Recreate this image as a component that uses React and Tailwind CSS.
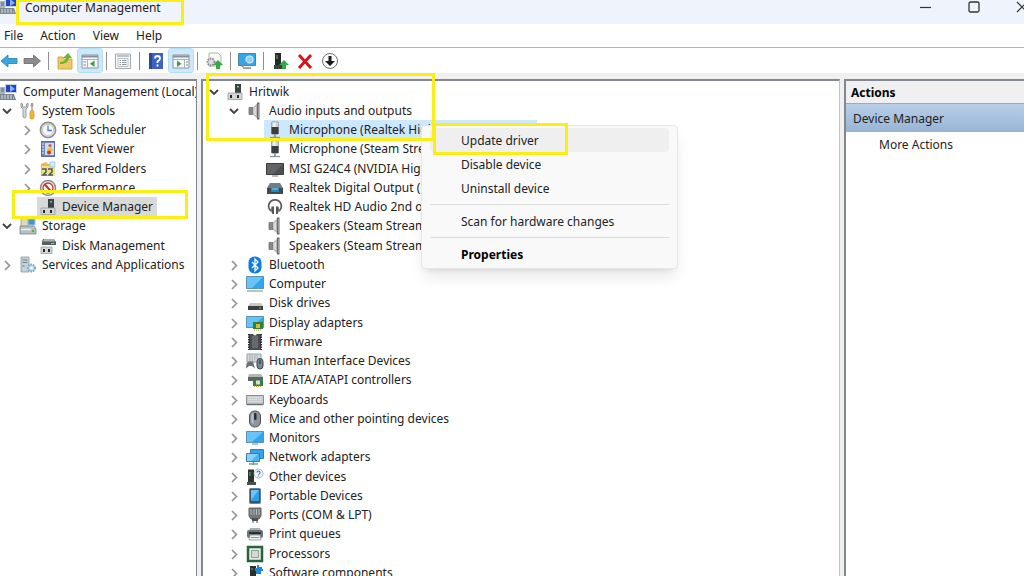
const icons = {
  computerManagement: (
    <>
      <path d="M5 1h12v9H5z" fill="#c9d3e4" />
      <path d="M6 2h10v7H6z" fill="#2643c4" />
      <path d="M10 2l5 4-5 3z" fill="#7fb2ff" />
      <path d="M0 4h5v8H0z" fill="#aab4bd" />
      <path d="M1 6h3M1 8h3" stroke="#5b6670" />
      <path d="M0 11h14l2 6H0z" fill="#7d8791" />
      <path d="M1 13h12M1 15h13" stroke="#dfe5ea" strokeDasharray="2 1" />
    </>
  ),
  tools: (
    <>
      <path
        d="M2 1v4l2 2v8q1.500 2 3 0V7l2-2V1L7.500 2v3h-4V2z"
        fill="#d5dade"
        stroke="#84898e"
        strokeWidth=".8"
      />
      <path d="M12 1h2l.5 3-.8 1v4h-1.400V5l-.8-1z" fill="#9ba1a6" />
      <rect x="11" y="8.500" width="4" height="8.500" rx="1.500" fill="#f2b632" stroke="#c78817" strokeWidth=".6" />
    </>
  ),
  clock: (
    <>
      <circle cx="9" cy="9" r="7.600" fill="#dfe5ea" stroke="#8c9296" strokeWidth="1.600" />
      <circle cx="9" cy="9" r="5.600" fill="#f4f8fc" stroke="#c9bd93" strokeWidth=".7" />
      <path d="M9 4.500V9.500h4" fill="none" stroke="#5b80b0" strokeWidth="1.300" />
    </>
  ),
  eventViewer: (
    <>
      <rect x="2.500" y="1.500" width="13" height="15" fill="#7187b4" stroke="#5a6e99" />
      <path d="M6 3h9v12H6z" fill="#cddcf0" />
      <path d="M3 4h2M3 7h2M3 10h2M3 13h2" stroke="#e7edf7" />
      <path d="M8 9.500l4-3 2 4-5 3z" fill="#f2c02c" />
      <circle cx="11" cy="5.500" r="1.600" fill="#d65a4a" />
      <circle cx="10" cy="12.500" r="2" fill="#c93434" />
    </>
  ),
  sharedFolders: (
    <>
      <path d="M2 4l5-2 2 2h7v12H2z" fill="#e5bd4c" />
      <path d="M3 6h13v10H3z" fill="#f8dd83" />
      <path d="M11 2h5v5h-5z" fill="#d8ecf8" stroke="#8db1c9" strokeWidth=".6" />
      <path d="M3 9h4v3l-3 3h4M9 9h4v3l-3 3h4" fill="none" stroke="#42605a" strokeWidth="1.500" />
    </>
  ),
  performance: (
    <>
      <circle cx="9" cy="9" r="7.500" fill="#f4f4f4" stroke="#8c8c8c" strokeWidth="1.500" />
      <circle cx="9" cy="9" r="5" fill="#fff" stroke="#c93434" strokeWidth="1.300" />
      <path d="M5.500 5l7 8" stroke="#c93434" strokeWidth="2" />
    </>
  ),
  device: (
    <>
      <path d="M9 1h6v10H9z" fill="#3c4245" />
      <path d="M11 3h2v1.500h-2z" fill="#8dc492" />
      <path d="M2 10h14v6.500H2z" fill="#d3d6d7" stroke="#9a9e9f" strokeWidth=".8" />
      <path d="M4 12h2v3H4zM11 12h2v3h-2z" fill="#25292b" />
    </>
  ),
  storage: (
    <>
      <path d="M2 1h7v9H2z" fill="#e0d9b7" stroke="#9b9778" strokeWidth=".7" />
      <path d="M9 2h7v6H9z" fill="#3f94d3" stroke="#b2c5d2" />
      <path d="M1 9h14l2 3v5H1z" fill="#b8c0c4" stroke="#798388" strokeWidth=".8" />
      <path d="M2 12.500h10" stroke="#edf1f3" strokeWidth="1.500" />
      <circle cx="14" cy="14" r="1.300" fill="#4bb84b" />
    </>
  ),
  disk: (
    <>
      <path d="M4 2h11l2 3v3H3V5z" fill="#56605d" />
      <path d="M5 2h10l1 2.500H4z" fill="#a8b1ae" />
      <path d="M12 6.500h3" stroke="#78d77e" />
      <path d="M2 10h11v6.500H2z" fill="#d3d6d7" stroke="#9a9e9f" strokeWidth=".8" />
      <path d="M4 12h2v3H4zM9 12h2v3H9z" fill="#25292b" />
    </>
  ),
  services: (
    <>
      <path d="M2 1h8v15H2z" fill="#c8d0d7" stroke="#8e989f" strokeWidth=".8" />
      <path d="M3.500 4h5M3.500 6.500h5" stroke="#74808a" />
      <path d="M3.500 9h2v2h-2z" fill="#54b7d7" />
      <circle cx="12.500" cy="12" r="3.500" fill="#b9ddee" stroke="#6aa3c4" strokeDasharray="1.500 1" strokeWidth="1.800" />
      <circle cx="12.500" cy="12" r="1.300" fill="#fff" />
    </>
  ),
  speaker: (
    <>
      <path d="M3 5.500h4v7H3z" fill="#8a8a8a" stroke="#666" strokeWidth=".7" />
      <path d="M7 5.500L11.500 1v16L7 12.500z" fill="#b9b9b9" />
      <path d="M11 .5h2.500v17H11z" fill="#6a6a6a" />
      <path d="M7.500 6.500l2.500-2v9l-2.500-2z" fill="#dadada" />
      <path d="M12 2h.8v14H12z" fill="#a9a9a9" />
    </>
  ),
  microphone: (
    <>
      <rect x="5.500" y=".8" width="7" height="12.500" rx="1" fill="#d0d3d5" stroke="#9ea2a5" strokeWidth=".9" />
      <path d="M5.500 6h7v7h-7z" fill="#3b3e40" />
      <path d="M7.500 1.500h2v4.500h-2z" fill="#f7f8f9" />
      <path d="M8 13h2v3H8z" fill="#9a9ea1" />
      <path d="M4 16.500h10" stroke="#8c9194" strokeWidth="1.300" />
    </>
  ),
  display: (
    <>
      <path d="M.5 3.500h17v11H.5z" fill="#4d4f50" stroke="#3c3c3c" />
      <path d="M1 4h16L7 14H1z" fill="#626567" />
      <path d="M6 16h6" stroke="#777" />
    </>
  ),
  digitalOutput: (
    <>
      <path d="M4 4h10l3 5H1z" fill="#717d85" />
      <path d="M1 9h16v6H1z" fill="#3d4b55" />
      <path d="M5 9h8v4H5z" fill="#2c86ba" />
      <path d="M6 10h6" stroke="#7ecbf0" />
    </>
  ),
  headphones: (
    <>
      <path d="M5 13C.5 9 3 1.800 9 1.800S17.500 9 13 13" fill="none" stroke="#5a5c5d" strokeWidth="1.700" />
      <path d="M5.500 8.500H8V16H6.500Q4.500 13 5.500 8.500zM10 8.500h2.500q1 4.500-1 7.500H10z" fill="#555" />
    </>
  ),
  bluetooth: (
    <>
      <rect x="2.500" y=".5" width="13" height="17" rx="6" fill="#0b7de3" />
      <path d="M6 6l6 6-3 3V3l3 3-6 6" fill="none" stroke="#fff" strokeWidth="1.300" />
    </>
  ),
  computer: (
    <>
      <path d="M.5 1.500h17v12H.5z" fill="#36a4ea" stroke="#5c93b5" />
      <path d="M1 2h16L6 13H1z" fill="#68c3f8" />
      <path d="M1 16h16" stroke="#9fb0ba" strokeWidth="1.500" />
    </>
  ),
  diskDrive: (
    <>
      <path d="M4 9h11l2 3H2z" fill="#c9c9c9" />
      <path d="M2 12h15v4H2z" fill="#3b3e3c" />
      <path d="M13 14h2" stroke="#6fbc78" />
    </>
  ),
  displayAdapter: (
    <>
      <path d="M.5 2.500h17v11H.5z" fill="#36a4ea" stroke="#5c93b5" />
      <path d="M1 3h16L6 13H1z" fill="#68c3f8" />
      <path d="M7 8h10v7H7z" fill="#36803c" />
      <path d="M10 10h4v4h-4z" fill="#d8b93a" />
      <path d="M8 16h8" stroke="#b99c36" strokeDasharray="1 1" />
    </>
  ),
  firmware: (
    <>
      <path d="M3 1h12v16H3z" fill="#4b4d4e" />
      <path d="M3 1v16M15 1v16" stroke="#2b2b2b" strokeWidth="2" strokeDasharray="1.500 1" />
      <path d="M6 3h6v12H6z" fill="#666a6c" />
      <path d="M7 1q2 3 4 0z" fill="#eee" />
    </>
  ),
  hid: (
    <>
      <path d="M1 2h14v8H1z" fill="#d5dbdf" stroke="#98a0a6" />
      <path d="M3 4h10M3 6h10M3 8h6" stroke="#929ca3" strokeDasharray="1.500 1" />
      <path d="M0 16.500q0-7 3-7h4l2 7-3-2.500H3z" fill="#6b7276" />
      <rect x="11" y="6.500" width="6" height="10.500" rx="3" fill="#7a868f" stroke="#3c454b" />
      <path d="M14 8v4" stroke="#27303a" />
    </>
  ),
  ide: (
    <>
      <path d="M3 3h12l2 3H2z" fill="#b2b8b5" />
      <path d="M2 6h15v4H2z" fill="#5b6562" />
      <path d="M7 8h10v7H7z" fill="#367f49" />
      <path d="M10 9.500h4v4h-4z" fill="#dde0c4" />
      <path d="M8 15.500h8" stroke="#c5a53c" strokeDasharray="1 1" />
    </>
  ),
  keyboard: (
    <>
      <path d="M.5 4.500h17v9H.5z" fill="#c7cbcd" stroke="#8a9195" />
      <path d="M2 6.500h14M2 8.500h14M2 10.500h14" stroke="#dfe3e5" strokeDasharray="1.500 .5" />
      <path d="M1 13.500h16" stroke="#6a7175" strokeWidth="1.500" />
    </>
  ),
  mouse: (
    <>
      <rect x="3.500" y="1" width="11" height="16" rx="5" fill="#8c949c" stroke="#4c5258" />
      <path d="M5.500 5q1-2 2-2v11q-2 0-2-4z" fill="#bcc3c9" />
      <rect x="8" y="3" width="2.500" height="7" rx="1" fill="#27303a" />
    </>
  ),
  monitor: (
    <>
      <path d="M.5 2.500h17v11H.5z" fill="#36a4ea" stroke="#5c93b5" />
      <path d="M1 3h16L6 13H1z" fill="#68c3f8" />
      <path d="M6 15h6" stroke="#9fb0ba" strokeWidth="1.500" />
    </>
  ),
  network: (
    <>
      <path d="M4.500 1.500h13v9h-13z" fill="#36a4ea" stroke="#3c7da8" />
      <path d="M.5 5.500h13v8H.5z" fill="#4cb4f3" stroke="#3c7da8" />
      <path d="M1 6h11l-7 7H1z" fill="#86d2fb" />
      <path d="M7.500 14v3M3 16h9" stroke="#6fa58a" strokeWidth="1.500" />
    </>
  ),
  other: (
    <>
      <path d="M2 1.500h6V14H2z" fill="#2c3330" />
      <path d="M3 5h2M3 7h2" stroke="#62c46d" />
      <path d="M1 14h9v3H1z" fill="#4b514e" />
      <circle cx="12.500" cy="5.500" r="4.500" fill="#f2f6f9" stroke="#9aa5ad" strokeWidth=".8" />
      <path d="M11 4.500q0-1.500 1.500-1.500T14 4.500t-1.500 2M12.500 7.500v1" fill="none" stroke="#3c78b5" strokeWidth="1.200" />
    </>
  ),
  portable: (
    <>
      <rect x="3.500" y="1.500" width="11" height="15" rx="1" fill="#43525d" stroke="#6b8597" />
      <path d="M5 3h8v11H5z" fill="#2fa0ea" />
      <path d="M5 3h8l-8 10z" fill="#68c3f8" />
    </>
  ),
  port: (
    <>
      <path d="M3 2h12v8l-2 3H5l-2-3z" fill="#737779" stroke="#606466" />
      <path d="M5 3v6M8 3v6M10.500 3v6M13 3v6" stroke="#b7bbbd" />
      <path d="M6 12h6v3H6z" fill="#4d5153" />
      <path d="M7 15v2M11 15v2" stroke="#8d9193" strokeWidth="1.500" />
    </>
  ),
  printer: (
    <>
      <path d="M4 3h10l1 3H3z" fill="#a9b0b4" />
      <rect x="1" y="5" width="16" height="8" rx="2" fill="#697279" />
      <path d="M3 7h12v2H3z" fill="#2a3034" />
      <path d="M4 10h10l1 5H3z" fill="#e9f0f2" stroke="#7f898e" strokeWidth=".7" />
      <path d="M5 12.500h8" stroke="#62b6a0" />
    </>
  ),
  processor: (
    <>
      <path d="M2 2h14v14H2z" fill="#e6ece4" stroke="#29633c" strokeWidth="2.500" />
      <path d="M5.500 5.500h7v7h-7z" fill="#d5dad5" stroke="#86a38c" />
    </>
  ),
  software: (
    <>
      <path d="M4 2h6v13H4z" fill="#292f2c" />
      <path d="M5 5h2" stroke="#62c46d" />
      <path d="M3 14h8v3H3z" fill="#4b514e" />
      <path d="M11 1h2v2h3v2h1v2h-2v3h-5V7H9V4h2z" fill="#1f86d9" />
    </>
  ),
};

const toolbarIcons = {
  back: <path d="M0 9l7-6v3.500h9v5H7V15z" fill="#3aa6dc" stroke="#2380b4" strokeWidth=".8" />,
  forward: <path d="M17.500 9l-7-6v3.500H1v5h9.500V15z" fill="#8c8c8c" stroke="#6a6a6a" strokeWidth=".8" />,
  up: (
    <>
      <path d="M2 5h5l1 2h8v10H2z" fill="#efc86a" stroke="#c69a3a" strokeWidth=".8" />
      <path d="M4 10q5 0 6-4H7l5-5 4 5h-3q-1 6-9 6z" fill="#6cb52d" />
    </>
  ),
  tree: (
    <>
      <path d="M1 3h16v13H1z" fill="#f5f8fa" stroke="#8c979f" />
      <path d="M1 4.500h16" stroke="#87939b" strokeWidth="2" />
      <path d="M1 7.500h16M6.500 8v8" stroke="#aab2b8" />
      <path d="M2.500 10h2.500M2.500 13h2.500" stroke="#7d8a93" />
      <path d="M13.500 8.500v6.500l-4.500-3.200z" fill="#3d9d39" />
    </>
  ),
  properties: (
    <>
      <path d="M1.500 2h15v14.500h-15z" fill="#f7f7f7" stroke="#a2a9ae" />
      <path d="M3 4h12" stroke="#bcc4ca" strokeWidth="2" />
      <path d="M4 6.500h10v8H4z" fill="#fff" stroke="#aab2b8" strokeWidth=".8" />
      <path d="M5.500 8.500h1.500M8 8.500h4.500M5.500 10.500h1.500M8 10.500h4.500M5.500 12.500h1.500M8 12.500h4.500" stroke="#8d99a2" />
    </>
  ),
  help: (
    <>
      <path d="M2 1h14v16H2z" fill="#3f62c0" />
      <path d="M2 1h3v16H2z" fill="#2b4796" />
      <path d="M8 6.500q0-2.500 2.500-2.500T13 6.500q0 1.500-2.500 3V11M10.500 12.500v2" fill="none" stroke="#fff" strokeWidth="1.800" />
    </>
  ),
  actionPane: (
    <>
      <path d="M1 3h16v13H1z" fill="#f5f8fa" stroke="#8c979f" />
      <path d="M1 4.500h16" stroke="#87939b" strokeWidth="2" />
      <path d="M1 7.500h16M12.500 8v8" stroke="#aab2b8" />
      <path d="M14 10h2M14 13h2" stroke="#7d8a93" />
      <path d="M5 8.500v6.500l4.500-3.200z" fill="#3d9d39" />
    </>
  ),
  update: (
    <>
      <path d="M4 1h9l3 3v10H4z" fill="#fafafa" stroke="#b3b3b3" />
      <circle cx="6" cy="10" r="3.500" fill="#ddd" stroke="#8c8c8c" strokeWidth="2" strokeDasharray="1.500 1" />
      <path d="M13 8l5 5h-3v4h-4v-4H8z" fill="#36a844" />
    </>
  ),
  scan: (
    <>
      <path d="M.5 1.500h17v12H.5z" fill="#36a4ea" stroke="#4c83a5" />
      <path d="M5 16h8" stroke="#788790" strokeWidth="1.500" />
      <circle cx="11.500" cy="7.500" r="3.500" fill="#8fd0f5" stroke="#d5eefb" strokeWidth="1.200" />
      <path d="M9 10l-5 5" stroke="#758b98" strokeWidth="1.500" />
    </>
  ),
  updateDriver: (
    <>
      <path d="M4 1h6v12H4z" fill="#232926" />
      <path d="M5 4h2M5 6h2" stroke="#62c46d" />
      <path d="M3 13h8v4H3z" fill="#3b413e" />
      <path d="M13 8l5 5h-3v4h-4v-4H8z" fill="#36a844" />
    </>
  ),
  remove: <path d="M3 3l12 13M15 3L3 16" stroke="#d6141b" strokeWidth="3" />,
  disable: (
    <>
      <circle cx="9" cy="9" r="7.500" fill="#fdfdfd" stroke="#6f6f6f" />
      <path d="M7.500 4h3v5H14l-5 5-5-5h3.500z" fill="#1b1b1b" />
    </>
  ),
};

const toolbar = [
  { icon: "back", label: "Back" },
  { icon: "forward", label: "Forward" },
  null,
  { icon: "up", label: "Up one level" },
  { icon: "tree", label: "Show/Hide console tree", active: true },
  null,
  { icon: "properties", label: "Properties" },
  null,
  { icon: "help", label: "Help" },
  { icon: "actionPane", label: "Show/Hide action pane", active: true },
  null,
  { icon: "update", label: "Update device drivers" },
  null,
  { icon: "scan", label: "Scan for hardware changes" },
  null,
  { icon: "updateDriver", label: "Update driver" },
  { icon: "remove", label: "Uninstall device" },
  { icon: "disable", label: "Disable device" },
];

const consoleTree = [
  { level: 0, icon: "computerManagement", label: "Computer Management (Local)" },
  { level: 1, icon: "tools", label: "System Tools", state: "open" },
  { level: 2, icon: "clock", label: "Task Scheduler", state: "closed" },
  { level: 2, icon: "eventViewer", label: "Event Viewer", state: "closed" },
  { level: 2, icon: "sharedFolders", label: "Shared Folders", state: "closed" },
  { level: 2, icon: "performance", label: "Performance", state: "closed" },
  { level: 2, icon: "device", label: "Device Manager", selected: "bg-[#d9d9d9]" },
  { level: 1, icon: "storage", label: "Storage", state: "open" },
  { level: 2, icon: "disk", label: "Disk Management" },
  { level: 1, icon: "services", label: "Services and Applications", state: "closed" },
];

const deviceTree = [
  { level: 1, icon: "device", label: "Hritwik", state: "open" },
  { level: 2, icon: "speaker", label: "Audio inputs and outputs", state: "open" },
  { level: 3, icon: "microphone", label: "Microphone (Realtek High Definition Audio)", selected: "bg-[#cce8ff]" },
  { level: 3, icon: "microphone", label: "Microphone (Steam Streaming Microphone)" },
  { level: 3, icon: "display", label: "MSI G24C4 (NVIDIA High Definition Audio)" },
  { level: 3, icon: "digitalOutput", label: "Realtek Digital Output (Realtek(R) Audio)" },
  { level: 3, icon: "headphones", label: "Realtek HD Audio 2nd output" },
  { level: 3, icon: "speaker", label: "Speakers (Steam Streaming Microphone)" },
  { level: 3, icon: "speaker", label: "Speakers (Steam Streaming Speakers)" },
  { level: 2, icon: "bluetooth", label: "Bluetooth", state: "closed" },
  { level: 2, icon: "computer", label: "Computer", state: "closed" },
  { level: 2, icon: "diskDrive", label: "Disk drives", state: "closed" },
  { level: 2, icon: "displayAdapter", label: "Display adapters", state: "closed" },
  { level: 2, icon: "firmware", label: "Firmware", state: "closed" },
  { level: 2, icon: "hid", label: "Human Interface Devices", state: "closed" },
  { level: 2, icon: "ide", label: "IDE ATA/ATAPI controllers", state: "closed" },
  { level: 2, icon: "keyboard", label: "Keyboards", state: "closed" },
  { level: 2, icon: "mouse", label: "Mice and other pointing devices", state: "closed" },
  { level: 2, icon: "monitor", label: "Monitors", state: "closed" },
  { level: 2, icon: "network", label: "Network adapters", state: "closed" },
  { level: 2, icon: "other", label: "Other devices", state: "closed" },
  { level: 2, icon: "portable", label: "Portable Devices", state: "closed" },
  { level: 2, icon: "port", label: "Ports (COM & LPT)", state: "closed" },
  { level: 2, icon: "printer", label: "Print queues", state: "closed" },
  { level: 2, icon: "processor", label: "Processors", state: "closed" },
  { level: 2, icon: "software", label: "Software components", state: "closed" },
];

const indents = ["", "", "pl-5", "pl-10"];

function Icon({ children }) {
  return (
    <svg viewBox="0 0 18 18" className="size-[18px] shrink-0" aria-hidden="true">
      {children}
    </svg>
  );
}

function Chevron({ state, label }) {
  if (!state) return <span className="w-3.5 shrink-0" />;
  return (
    <button
      type="button"
      aria-label={state === "open" ? `Collapse ${label}` : `Expand ${label}`}
      className="flex w-3.5 shrink-0 justify-center"
    >
      <svg viewBox="0 0 12 12" className="size-3" fill="none">
        {state === "open" ? (
          <path d="M2 4l4 4 4-4" stroke="#404040" strokeWidth="1.800" />
        ) : (
          <path d="M4 2l4.500 4.500L4 11" stroke="#929292" strokeWidth="1.600" />
        )}
      </svg>
    </button>
  );
}

function Tree({ items, label }) {
  return (
    <ul role="tree" aria-label={label} className="pt-px">
      {items.map((item, i) => (
        <li
          key={i}
          role="treeitem"
          aria-level={item.level + 1}
          aria-selected={Boolean(item.selected)}
          className={`flex h-[19px] items-center gap-[3px] whitespace-nowrap nth-[4n]:mb-px ${indents[item.level]}`}
        >
          {item.level > 0 && <Chevron state={item.state} label={item.label} />}
          <span
            className={`flex h-full items-center gap-[5px] pr-1 ${item.level > 0 ? "pl-0.5" : ""} ${item.selected || ""}`}
          >
            <Icon>{icons[item.icon]}</Icon>
            {item.label}
          </span>
        </li>
      ))}
    </ul>
  );
}

function TitleBar() {
  return (
    <header className="flex h-6 items-start justify-between bg-[#eff3fb]">
      <div className="flex items-start gap-2">
        <svg viewBox="0 3 17 15" className="h-[15px] w-[17px]" aria-hidden="true">
          {icons.computerManagement}
        </svg>
        <h1 className="leading-4">Computer Management</h1>
      </div>
      <div className="flex h-3.5 items-center gap-9 overflow-hidden">
        <button type="button" aria-label="Minimize">
          <svg viewBox="0 0 12 12" className="size-3">
            <path d="M0 6.500h11" stroke="#333" strokeWidth="1.200" />
          </svg>
        </button>
        <button type="button" aria-label="Maximize">
          <svg viewBox="0 0 12 12" className="size-3">
            <rect x="1" y="1" width="10" height="10" rx="1.500" fill="none" stroke="#333" strokeWidth="1.300" />
          </svg>
        </button>
        <button type="button" aria-label="Close">
          <svg viewBox="0 0 8 12" className="h-3 w-2">
            <path d="M1 1l10 10M11 1L1 11" stroke="#333" strokeWidth="1.200" />
          </svg>
        </button>
      </div>
    </header>
  );
}

function MenuBar() {
  return (
    <nav className="flex h-6 items-center gap-[17px] border-b border-[#b5b5b5] bg-white px-1">
      {["File", "Action", "View", "Help"].map((name) => (
        <button key={name} type="button">
          {name}
        </button>
      ))}
    </nav>
  );
}

function Toolbar() {
  return (
    <div role="toolbar" className="flex h-[25px] items-center gap-px bg-white">
      {toolbar.map((item, i) =>
        item ? (
          <button
            key={i}
            type="button"
            aria-label={item.label}
            className={`flex h-[23px] items-center justify-center rounded-xs ${i === 0 ? "w-[19px]" : "w-6"} ${
              item.active ? "bg-[#cce8fb] outline outline-[#b5dcf5]" : ""
            }`}
          >
            <Icon>{toolbarIcons[item.icon]}</Icon>
          </button>
        ) : (
          <span key={i} className="mx-[3px] h-[18px] w-px bg-[#8f8f8f]" />
        )
      )}
    </div>
  );
}

function ContextMenu() {
  const item = "mx-2 flex h-6 items-center rounded-sm pl-[31px] text-left";
  const line = "mx-2 my-1 border-[#dcdcdc]";
  return (
    <div
      role="menu"
      className="absolute top-[125px] left-[421px] flex w-[257px] flex-col rounded-sm border border-[#e6e6e6] bg-[#f9f9f9] py-0.5 shadow-lg"
    >
      <button type="button" role="menuitem" className={`${item} bg-[#efefef]`}>
        Update driver
      </button>
      <button type="button" role="menuitem" className={item}>
        Disable device
      </button>
      <button type="button" role="menuitem" className={item}>
        Uninstall device
      </button>
      <hr className={line} />
      <button type="button" role="menuitem" className={item}>
        Scan for hardware changes
      </button>
      <hr className={line} />
      <button type="button" role="menuitem" className={`${item} font-bold text-black`}>
        Properties
      </button>
    </div>
  );
}

function App() {
  return (
    <div className="relative flex h-screen flex-col overflow-hidden bg-[#f0f0f0] font-['Noto_Sans','Open_Sans',sans-serif] text-xs leading-[19px] text-[#222]">
      <TitleBar />
      <MenuBar />
      <Toolbar />

      <main className="flex min-h-0 flex-1 gap-1 pt-1.5">
        <aside className="w-[197px] shrink-0 overflow-hidden border-t-2 border-r border-[#828790] bg-white">
          <Tree items={consoleTree} label="Console tree" />
        </aside>

        <section className="min-w-0 flex-1 overflow-hidden border-t-2 border-r border-l-2 border-[#828790] border-r-[#c4c4c4] bg-white pl-1">
          <Tree items={deviceTree} label="Devices" />
        </section>

        <aside className="w-[180px] shrink-0 overflow-hidden border-t-2 border-l-2 border-[#828790] bg-white">
          <h2 className="flex h-[23px] items-center border-b border-[#a8a8a8] bg-[#f0f0f0] pl-[5px] font-bold text-black">
            Actions
          </h2>
          <h3 className="flex h-7 items-center bg-linear-to-b from-[#b9cfe9] to-[#98b4d4] pl-[7px]">
            Device Manager
          </h3>
          <button type="button" className="flex h-6 items-center pl-[33px]">
            More Actions
          </button>
        </aside>
      </main>

      <ContextMenu />

      {/* highlighted steps */}
      <div className="pointer-events-none absolute -top-px left-4 h-[26px] w-[168px] border-3 border-[#fbee12]" />
      <div className="pointer-events-none absolute top-[190px] left-3 h-[29px] w-[176px] border-3 border-[#fbee12]" />
      <div className="pointer-events-none absolute top-[73px] left-[206px] h-[68px] w-[229px] border-3 border-[#fbee12]" />
      <div className="pointer-events-none absolute top-[123px] left-[433px] h-8 w-[135px] border-3 border-[#fbee12]" />
    </div>
  );
}

export default App;
